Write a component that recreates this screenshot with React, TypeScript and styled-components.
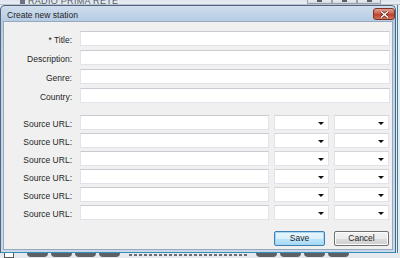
import { Fragment } from 'react';
import styled, { createGlobalStyle } from 'styled-components';

const GlobalStyle = createGlobalStyle`
  html, body {
    margin: 0;
    padding: 0;
  }
  body {
    background: #e4e8ee;
    font-family: "Liberation Sans", Arial, sans-serif;
  }
`;

const Screen = styled.div`
  width: 400px;
  height: 258px;
  overflow: hidden;
  display: flex;
  flex-direction: column;
  background: #e4e8ee;
`;

const BackWindowBar = styled.div`
  height: 5px;
  flex: none;
  display: flex;
  align-items: flex-end;
  overflow: hidden;
  background: linear-gradient(#dde5ee, #e9edf2);
  border-bottom: 1px solid #b8c2cc;
  box-sizing: border-box;
  padding-left: 20px;
`;

const BackIcon = styled.span`
  width: 5px;
  height: 4px;
  margin-right: 3px;
  background: #6b7480;
  align-self: flex-start;
`;

const BackTitle = styled.span`
  font-size: 9px;
  line-height: 9px;
  color: #555c66;
  letter-spacing: 0.3px;
  margin-bottom: -2px;
`;

const BackButtons = styled.div`
  display: flex;
  margin-left: auto;
  margin-right: 19px;
  align-self: stretch;
`;

const BackButton = styled.span<{ $w: number }>`
  width: ${(p) => p.$w}px;
  border: 1px solid #9aa4ae;
  border-top: none;
  background: linear-gradient(#e9edf1, #d4dae1);
  display: flex;
  justify-content: center;
  align-items: flex-end;
  box-sizing: border-box;
  &::after {
    content: '';
    width: 5px;
    height: 3px;
    background: #5a6068;
    margin-bottom: 1px;
  }
`;

const Middle = styled.div`
  display: flex;
  flex: none;
  height: 248px;
`;

const Dialog = styled.div`
  width: 396px;
  height: 248px;
  box-sizing: border-box;
  border: 1px solid #52657c;
  border-bottom-color: #3b8eb3;
  border-radius: 5px 5px 0 0;
  background: linear-gradient(#cfdded 0px, #b4cbe4 16px, #c3d5e9 60px, #c8d8ea 100%);
  display: flex;
  flex-direction: column;
`;

const RightEdge = styled.div`
  flex: 1;
  background: #e8ebee;
  border-left: 1px solid #2f86ae;
  margin-left: 1px;
`;

const TitleBar = styled.div`
  height: 15px;
  flex: none;
  display: flex;
  align-items: flex-start;
  justify-content: space-between;
  padding-left: 6px;
`;

const TitleText = styled.span`
  font-size: 8.5px;
  height: 15px;
  line-height: 18px;
  color: #1e1e1e;
`;

const CloseButton = styled.span`
  width: 22px;
  height: 12px;
  margin-top: 2px;
  box-sizing: border-box;
  border: 1px solid #7d3226;
  border-radius: 3px;
  background: linear-gradient(#e5a18f, #c75744 50%, #b83d2b 51%, #d0735c);
  display: flex;
  align-items: center;
  justify-content: center;
`;

const Body = styled.div`
  flex: 1;
  margin: 0 2px 2px 2px;
  border: 1px solid #97a9bd;
  background: #f0f0f0;
  display: flex;
  flex-direction: column;
  padding: 9px 2px 0 0;
  font-size: 8.5px;
  color: #1e1e1e;
`;

const FieldGroup = styled.div<{ $gap: number }>`
  display: grid;
  grid-template-columns: 68px 1fr;
  grid-auto-rows: 15px;
  column-gap: 8px;
  row-gap: ${(p) => p.$gap}px;
  & + & {
    margin-top: 12px;
  }
`;

const Label = styled.label`
  text-align: right;
  height: 15px;
  line-height: 18px;
  white-space: nowrap;
`;

const TextInput = styled.input`
  height: 15px;
  min-width: 0;
  box-sizing: border-box;
  margin: 0;
  padding: 0 3px;
  border: 1px solid #e2e3ea;
  border-top-color: #c9cbd2;
  background: #fff;
  font: inherit;
  outline: none;
`;

const SourceRow = styled.div`
  display: grid;
  grid-template-columns: 1fr 55px 55px;
  column-gap: 5px;
  padding-right: 1px;
`;

const Combo = styled.div`
  height: 15px;
  box-sizing: border-box;
  border: 1px solid #e2e3ea;
  border-top-color: #d3d5db;
  background: #fff;
  display: flex;
  align-items: center;
  justify-content: flex-end;
  padding-right: 4px;
  &::after {
    content: '';
    width: 0;
    height: 0;
    border-left: 3px solid transparent;
    border-right: 3px solid transparent;
    border-top: 3px solid #111;
    margin-top: 1px;
  }
`;

const ButtonRow = styled.div`
  display: flex;
  justify-content: flex-end;
  gap: 9px;
  margin-top: 11px;
  padding-right: 1px;
`;

const Button = styled.button<{ $focused?: boolean; $w: number }>`
  width: ${(p) => p.$w}px;
  height: 15px;
  box-sizing: border-box;
  margin: 0;
  padding: 0;
  font: inherit;
  line-height: 13px;
  color: #1e1e1e;
  border-radius: 2px;
  border: 1px solid ${(p) => (p.$focused ? '#3c7fb1' : '#707070')};
  background: ${(p) =>
    p.$focused
      ? 'linear-gradient(#eaf6fd, #d9f0fc 50%, #bee6fd 51%, #a7d9f5)'
      : 'linear-gradient(#f2f2f2, #ebebeb 50%, #dddddd 51%, #cfcfcf)'};
  box-shadow: inset 0 0 0 1px ${(p) => (p.$focused ? '#a8d8f3' : '#fcfcfc')};
`;

const Taskbar = styled.div`
  height: 5px;
  flex: none;
  display: flex;
  align-items: flex-start;
  background: #e6e9ed;
  padding-left: 4px;
  gap: 3px;
`;

const TaskBox = styled.span`
  width: 10px;
  height: 5px;
  box-sizing: border-box;
  border: 1px solid #555;
  border-top: none;
  background: #fff;
  margin-right: 10px;
`;

const TaskPill = styled.span`
  width: 21px;
  height: 4px;
  background: #5d6166;
  border-radius: 0 0 5px 5px;
`;

const TaskDashes = styled.span<{ $w: number }>`
  width: ${(p) => p.$w}px;
  height: 2px;
  margin: 1px 6px 0;
  background: repeating-linear-gradient(90deg, #6a6e74 0 3px, transparent 3px 5px);
`;

const mainFields = ['* Title:', 'Description:', 'Genre:', 'Country:'];
const sourceRows = [1, 2, 3, 4, 5, 6];

function App() {
  return (
    <>
      <GlobalStyle />
      <Screen>
        <BackWindowBar>
          <BackIcon />
          <BackTitle>RADIO PRIMA RETE</BackTitle>
          <BackButtons>
            <BackButton $w={25} />
            <BackButton $w={25} />
            <BackButton $w={24} />
          </BackButtons>
        </BackWindowBar>

        <Middle>
          <Dialog>
            <TitleBar>
              <TitleText>Create new station</TitleText>
              <CloseButton>
                <svg width="9" height="7" viewBox="0 0 9 7">
                  <path d="M1 0.5 L8 6.5 M8 0.5 L1 6.5" stroke="#5a1a10" strokeWidth="2.6" />
                  <path d="M1 0.5 L8 6.5 M8 0.5 L1 6.5" stroke="#fff" strokeWidth="1.5" />
                </svg>
              </CloseButton>
            </TitleBar>

            <Body>
              <FieldGroup $gap={4}>
                {mainFields.map((label) => (
                  <Fragment key={label}>
                    <Label>{label}</Label>
                    <TextInput />
                  </Fragment>
                ))}
              </FieldGroup>

              <FieldGroup $gap={3}>
                {sourceRows.map((n) => (
                  <Fragment key={n}>
                    <Label>Source URL:</Label>
                    <SourceRow>
                      <TextInput />
                      <Combo />
                      <Combo />
                    </SourceRow>
                  </Fragment>
                ))}
              </FieldGroup>

              <ButtonRow>
                <Button $focused $w={51}>Save</Button>
                <Button $w={55}>Cancel</Button>
              </ButtonRow>
            </Body>
          </Dialog>
          <RightEdge />
        </Middle>

        <Taskbar>
          <TaskBox />
          <TaskPill />
          <TaskPill />
          <TaskPill />
          <TaskPill />
          <TaskDashes $w={118} />
          <TaskPill />
          <TaskPill />
          <TaskPill />
          <TaskPill />
        </Taskbar>
      </Screen>
    </>
  );
}

export default App;
